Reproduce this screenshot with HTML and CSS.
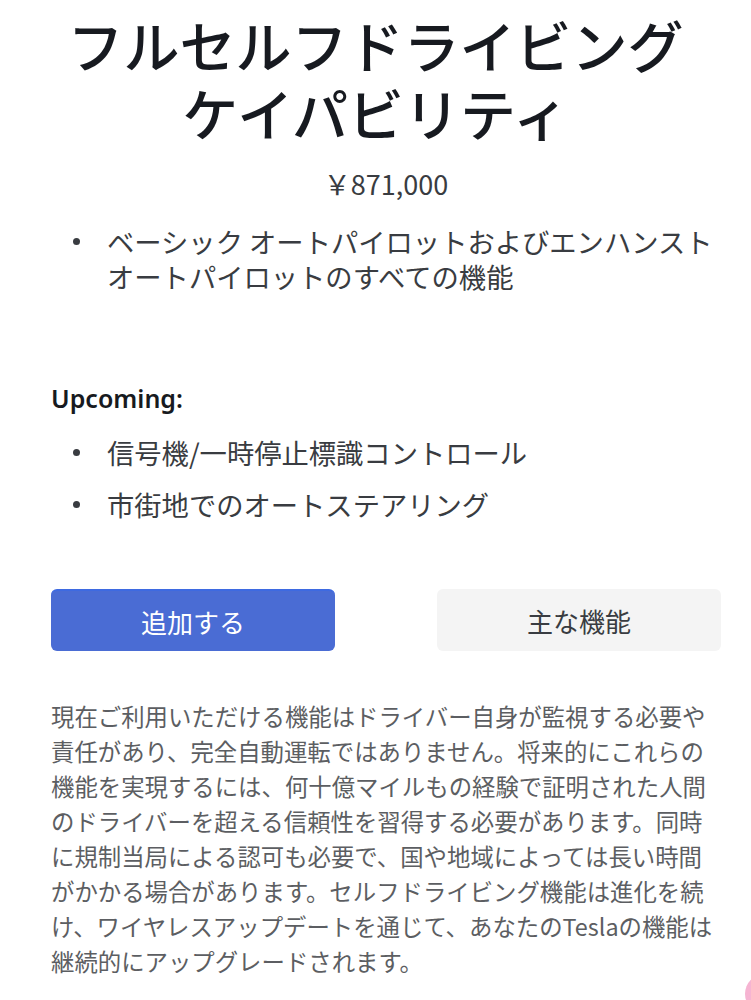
FILE: index.html
```html
<!DOCTYPE html>
<html lang="ja">
<head>
    <meta charset="UTF-8">
    <meta name="viewport" content="width=device-width, initial-scale=1.0">
    <title>フルセルフドライビング ケイパビリティ</title>
    <link rel="stylesheet" href="styles.css">
</head>
<body>
    <div class="container">
        <h1 class="title">フルセルフドライビング<br>ケイパビリティ</h1>
        <p class="price">￥871,000</p>

        <ul class="features">
            <li>ベーシック オートパイロットおよびエンハンスト オートパイロットのすべての機能</li>
        </ul>

        <h2 class="upcoming">Upcoming:</h2>
        <ul class="features upcoming-list">
            <li>信号機/一時停止標識コントロール</li>
            <li>市街地でのオートステアリング</li>
        </ul>

        <div class="actions">
            <button class="btn btn-primary">追加する</button>
            <button class="btn btn-secondary">主な機能</button>
        </div>

        <p class="disclaimer">現在ご利用いただける機能はドライバー自身が監視する必要や責任があり、完全自動運転ではありません。将来的にこれらの機能を実現するには、何十億マイルもの経験で証明された人間のドライバーを超える信頼性を習得する必要があります。同時に規制当局による認可も必要で、国や地域によっては長い時間がかかる場合があります。セルフドライビング機能は進化を続け、ワイヤレスアップデートを通じて、あなたのTeslaの機能は継続的にアップグレードされます。</p>
    </div>

    <div class="chat-bubble"></div>
</body>
</html>
```

FILE: styles.css
```css
body {
    font-family: 'Noto Sans CJK JP', 'Noto Sans', sans-serif;
    background-color: #fff;
    color: #171a20;
    margin: 0;
    overflow: hidden;
}

.container {
    padding: 10px 30px 0 30px;
}

.title {
    font-size: 56px;
    font-weight: 500;
    line-height: 68px;
    text-align: center;
    margin: 0;
}

.price {
    font-size: 27px;
    line-height: 35px;
    text-align: center;
    color: #393c41;
    margin: 20px 0 0;
    padding-left: 21px;
}

.features {
    list-style: none;
    margin: 23px 0 0;
    padding: 0 0 0 21px;
}

.features li {
    display: flex;
    font-size: 27.3px;
    line-height: 35px;
    color: #393c41;
}

.features li::before {
    content: "";
    flex: none;
    width: 7px;
    height: 7px;
    border-radius: 50%;
    background: #393c41;
    margin: 14px 27px 0 22px;
}

.upcoming {
    font-family: 'Noto Sans', sans-serif;
    font-size: 25px;
    font-weight: 600;
    line-height: 35px;
    margin: 87px 0 0 21px;
}

.upcoming-list {
    margin-top: 19px;
}

.upcoming-list li + li {
    margin-top: 17px;
}

.actions {
    display: flex;
    justify-content: space-between;
    margin: 67px 0 0 21px;
}

.btn {
    width: 284px;
    height: 62px;
    border: none;
    border-radius: 6px;
    font-family: inherit;
    font-size: 26px;
    cursor: pointer;
}

.btn-primary {
    background: #4a6cd4;
    border-top: 2px solid #3e6ae1;
    color: #fff;
}

.btn-secondary {
    background: #f4f4f4;
    color: #393c41;
}

.disclaimer {
    font-size: 23.4px;
    line-height: 35px;
    color: #5c5e62;
    margin: 48px 0 0 21px;
}

.chat-bubble {
    position: fixed;
    right: -34px;
    bottom: -14px;
    width: 40px;
    height: 40px;
    border-radius: 50%;
    background: #f6b4d2;
}
```
